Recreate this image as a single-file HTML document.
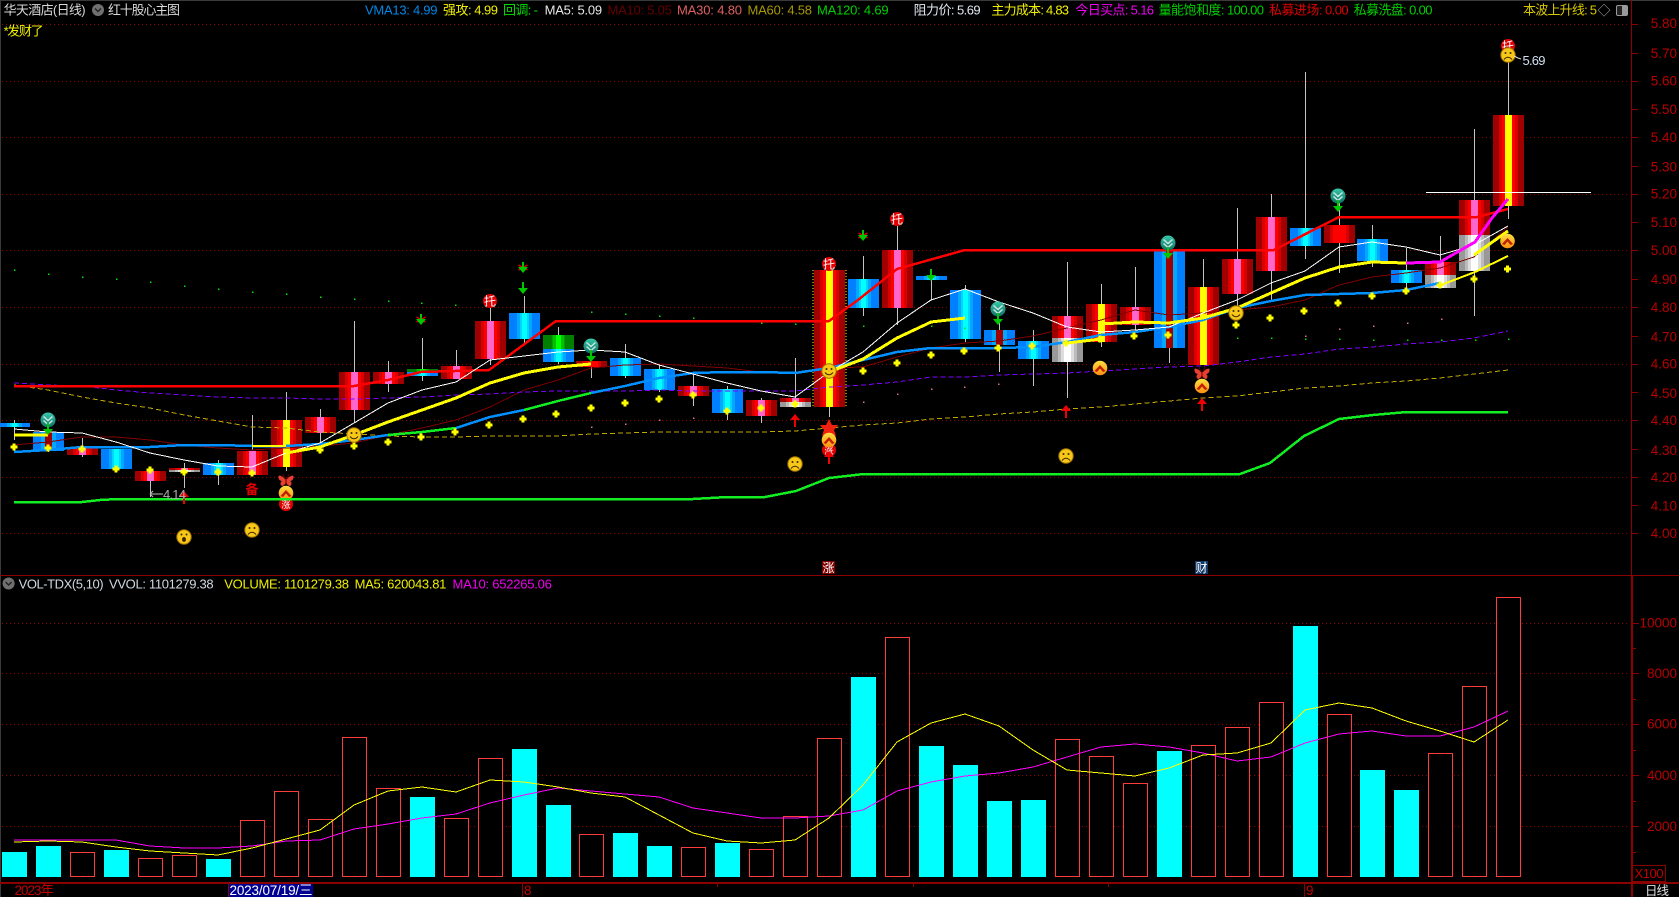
<!DOCTYPE html>
<html><head><meta charset="utf-8"><title>华天酒店</title>
<style>
html,body{margin:0;padding:0;background:#000;width:1679px;height:897px;overflow:hidden}
svg{display:block;font-family:"Liberation Sans","Noto Sans CJK SC",sans-serif}
.h{font-size:13px}
.a{font-size:13.5px;fill:#b80000;text-anchor:end}
.r{fill:#000;stroke:#ff3c3c;stroke-width:1}
.c{fill:#0ff}
</style></head><body>
<svg width="1679" height="897" viewBox="0 0 1679 897" xmlns="http://www.w3.org/2000/svg">
<defs>
<linearGradient id="p"><stop offset="0" stop-color="#a00000"/><stop offset=".19" stop-color="#a00000"/><stop offset=".19" stop-color="#d80000"/><stop offset=".29" stop-color="#d80000"/><stop offset=".29" stop-color="#f00"/><stop offset=".39" stop-color="#f00"/><stop offset=".39" stop-color="#ff66cc"/><stop offset=".61" stop-color="#ff66cc"/><stop offset=".61" stop-color="#f00"/><stop offset=".71" stop-color="#f00"/><stop offset=".71" stop-color="#d80000"/><stop offset=".81" stop-color="#d80000"/><stop offset=".81" stop-color="#a00000"/><stop offset="1" stop-color="#a00000"/></linearGradient>
<linearGradient id="y"><stop offset="0" stop-color="#a00000"/><stop offset=".19" stop-color="#a00000"/><stop offset=".19" stop-color="#d80000"/><stop offset=".29" stop-color="#d80000"/><stop offset=".29" stop-color="#f00"/><stop offset=".39" stop-color="#f00"/><stop offset=".39" stop-color="#ff0"/><stop offset=".61" stop-color="#ff0"/><stop offset=".61" stop-color="#f00"/><stop offset=".71" stop-color="#f00"/><stop offset=".71" stop-color="#d80000"/><stop offset=".81" stop-color="#d80000"/><stop offset=".81" stop-color="#a00000"/><stop offset="1" stop-color="#a00000"/></linearGradient>
<linearGradient id="d"><stop offset="0" stop-color="#a00000"/><stop offset=".19" stop-color="#a00000"/><stop offset=".19" stop-color="#d80000"/><stop offset=".29" stop-color="#d80000"/><stop offset=".29" stop-color="#f00"/><stop offset=".71" stop-color="#f00"/><stop offset=".71" stop-color="#d80000"/><stop offset=".81" stop-color="#d80000"/><stop offset=".81" stop-color="#a00000"/><stop offset="1" stop-color="#a00000"/></linearGradient>
<linearGradient id="b"><stop offset="0" stop-color="#007fff"/><stop offset=".26" stop-color="#007fff"/><stop offset=".26" stop-color="#00a8ff"/><stop offset=".35" stop-color="#00a8ff"/><stop offset=".35" stop-color="#00d4ff"/><stop offset=".42" stop-color="#00d4ff"/><stop offset=".42" stop-color="#0ff"/><stop offset=".58" stop-color="#0ff"/><stop offset=".58" stop-color="#00d4ff"/><stop offset=".65" stop-color="#00d4ff"/><stop offset=".65" stop-color="#00a8ff"/><stop offset=".74" stop-color="#00a8ff"/><stop offset=".74" stop-color="#007fff"/><stop offset="1" stop-color="#007fff"/></linearGradient>
<linearGradient id="m"><stop offset="0" stop-color="#007fff"/><stop offset=".26" stop-color="#007fff"/><stop offset=".26" stop-color="#00a8ff"/><stop offset=".39" stop-color="#00a8ff"/><stop offset=".39" stop-color="#a00000"/><stop offset=".61" stop-color="#a00000"/><stop offset=".61" stop-color="#00a8ff"/><stop offset=".74" stop-color="#00a8ff"/><stop offset=".74" stop-color="#007fff"/><stop offset="1" stop-color="#007fff"/></linearGradient>
<linearGradient id="w"><stop offset="0" stop-color="#999"/><stop offset=".19" stop-color="#999"/><stop offset=".19" stop-color="#bbb"/><stop offset=".29" stop-color="#bbb"/><stop offset=".29" stop-color="#ddd"/><stop offset=".39" stop-color="#ddd"/><stop offset=".39" stop-color="#fff"/><stop offset=".61" stop-color="#fff"/><stop offset=".61" stop-color="#ddd"/><stop offset=".71" stop-color="#ddd"/><stop offset=".71" stop-color="#bbb"/><stop offset=".81" stop-color="#bbb"/><stop offset=".81" stop-color="#999"/><stop offset="1" stop-color="#999"/></linearGradient>
<linearGradient id="g"><stop offset="0" stop-color="#008000"/><stop offset=".3" stop-color="#008000"/><stop offset=".3" stop-color="#00c000"/><stop offset=".42" stop-color="#00c000"/><stop offset=".42" stop-color="#0f0"/><stop offset=".58" stop-color="#0f0"/><stop offset=".58" stop-color="#00c000"/><stop offset=".7" stop-color="#00c000"/><stop offset=".7" stop-color="#008000"/><stop offset="1" stop-color="#008000"/></linearGradient>
<linearGradient id="tl" x1="0" y1="0" x2="0" y2="1"><stop offset="0" stop-color="#38c8a8"/><stop offset="1" stop-color="#0f6f68"/></linearGradient>
<linearGradient id="or" x1="0" y1="0" x2="0" y2="1"><stop offset="0" stop-color="#ffe040"/><stop offset="1" stop-color="#ff9010"/></linearGradient>
<g id="teal"><circle r="7.500" fill="url(#tl)"/><path d="M-4.500-3.500L0 .5L4.500-3.500M-4.500 .5L0 4.500L4.500 .5" fill="none" stroke="#c8e8e0" stroke-width="1.500"/></g>
<g id="ga"><path d="M-1-8h2v6h4l-5 6l-5-6h4z" fill="#00c800"/></g>
<g id="gs"><path d="M-4.500-3l9 5M4.500-3l-9 5" stroke="#e00000" stroke-width="1.500"/><path d="M-1-6h2v5h4l-5 6l-5-6h4z" fill="#00c800"/></g>
<g id="ra"><path d="M-1 7h2v-7h4l-5-6l-5 6h4z" fill="#f00000"/></g>
<g id="smile"><circle r="7.200" fill="#f8c818" stroke="#a07400" stroke-width="1"/><circle cx="-2.500" cy="-2" r="1" fill="#402800"/><circle cx="2.500" cy="-2" r="1" fill="#402800"/><path d="M-4 1.500Q0 6 4 1.500" fill="none" stroke="#402800" stroke-width="1"/></g>
<g id="sad"><circle r="7.200" fill="#f8c818" stroke="#a07400" stroke-width="1"/><circle cx="-2.500" cy="-2" r="1" fill="#402800"/><circle cx="2.500" cy="-2" r="1" fill="#402800"/><path d="M-4 4.500Q0 0 4 4.500" fill="none" stroke="#402800" stroke-width="1"/></g>
<g id="wow"><circle r="7.200" fill="#f8c818" stroke="#a07400" stroke-width="1"/><circle cx="-2.500" cy="-2.500" r="1" fill="#402800"/><circle cx="2.500" cy="-2.500" r="1" fill="#402800"/><ellipse cy="2.500" rx="2" ry="2.500" fill="#402800"/></g>
<g id="up"><circle r="7.300" fill="url(#or)"/><path d="M-5.500 3L0-3L5.500 3L3 4L0 .5L-3 4z" fill="#c02000"/></g>
<g id="bf"><path d="M0 0C-3-4-7-5-7.500-4C-8-1-6 1-4 1C-6 2-6 5-4 6C-2 6 0 3 0 1C0 3 2 6 4 6C6 5 6 2 4 1C6 1 8-1 7.500-4C7-5 3-4 0 0z" fill="#e84030"/><path d="M0-1V5M-1-1L-3-6M1-1L3-6" stroke="#600" stroke-width="1" fill="none"/></g>
<g id="dm"><path d="M-1.500-3.500h3v2h2v3h-2v2h-3v-2h-2v-3h2z" fill="#ff0" shape-rendering="crispEdges"/></g>
</defs>

<rect width="1679" height="897" fill="#000"/>
<rect width="1679" height="1" fill="#3a3a3a"/><rect width="1" height="897" fill="#3a3a3a"/>

<!-- grids -->
<g stroke="#900000" stroke-width="1" stroke-dasharray="1 3" shape-rendering="crispEdges">
<path d="M2 24.500H1628M2 81.500H1628M2 137.500H1628M2 194.500H1628M2 250.500H1628M2 307.500H1628M2 364.500H1628M2 420.500H1628M2 477.500H1628M2 533.500H1628"/>
<path d="M2 623.500H1628M2 673.500H1628M2 724.500H1628M2 775.500H1628M2 826.500H1628"/>
</g>

<!-- frame -->
<g fill="#8b0000" shape-rendering="crispEdges">
<rect x="0" y="575" width="1679" height="1"/>
<rect x="0" y="882" width="1679" height="2"/>
<rect x="1631" y="0" width="1" height="575"/>
<rect x="1631" y="575" width="2" height="322"/>
<path d="M1632 24h6v1h-6zM1632 53h6v1h-6zM1632 81h6v1h-6zM1632 109h6v1h-6zM1632 137h6v1h-6zM1632 166h6v1h-6zM1632 194h6v1h-6zM1632 222h6v1h-6zM1632 250h6v1h-6zM1632 279h6v1h-6zM1632 307h6v1h-6zM1632 336h6v1h-6zM1632 364h6v1h-6zM1632 392h6v1h-6zM1632 420h6v1h-6zM1632 449h6v1h-6zM1632 477h6v1h-6zM1632 505h6v1h-6zM1632 533h6v1h-6z"/>
<path d="M1633 623h6v1h-6zM1633 648h3v1h-3zM1633 673h6v1h-6zM1633 699h3v1h-3zM1633 724h6v1h-6zM1633 750h3v1h-3zM1633 775h6v1h-6zM1633 801h3v1h-3zM1633 826h6v1h-6zM1633 852h3v1h-3z"/>
<rect x="228" y="884" width="1" height="13"/><rect x="522" y="884" width="1" height="13"/><rect x="1304" y="884" width="1" height="13"/>
<path d="M717 884h1v3h-1zM913 884h1v3h-1zM1108 884h1v3h-1z"/>
</g>

<!-- header -->
<g class="h">
<text x="3.600" y="14.500" textLength="82" fill="#d8d8d8">华天酒店(日线)</text>
<text x="108" y="14.500" textLength="72" fill="#d8d8d8">红十股心主图</text>
<text x="365" y="14.500" textLength="72.500" fill="#0088e8">VMA13: 4.99</text>
<text x="443" y="14.500" textLength="55" fill="#f0f000">强攻: 4.99</text>
<text x="503" y="14.500" textLength="35" fill="#00e000">回调: -</text>
<text x="544.600" y="14.500" textLength="57.500" fill="#e8e8e8">MA5: 5.09</text>
<text x="607.500" y="14.500" textLength="64.300" fill="#640000">MA10: 5.05</text>
<text x="677" y="14.500" textLength="65" fill="#e06060">MA30: 4.80</text>
<text x="747.500" y="14.500" textLength="64.500" fill="#a89800">MA60: 4.58</text>
<text x="817" y="14.500" textLength="71.600" fill="#00d000">MA120: 4.69</text>
<text x="913.600" y="14.500" textLength="67" fill="#e0e8f0">阻力价: 5.69</text>
<text x="991.400" y="14.500" textLength="77.600" fill="#f0f000">主力成本: 4.83</text>
<text x="1075.400" y="14.500" textLength="78.600" fill="#f000f0">今日买点: 5.16</text>
<text x="1158.600" y="14.500" textLength="105.400" fill="#00d000">量能饱和度: 100.00</text>
<text x="1269" y="14.500" textLength="79.600" fill="#e00000">私募进场: 0.00</text>
<text x="1353.600" y="14.500" textLength="78.900" fill="#00d000">私募洗盘: 0.00</text>
<text x="1523" y="14.500" textLength="74" fill="#d8c800">本波上升线: 5</text>
<text x="3.600" y="35.500" textLength="40" fill="#f0f000">*发财了</text>
</g>
<text x="1597.500" y="15" font-size="13" fill="#aaa">◇</text>
<rect x="1616.500" y="5.500" width="11" height="10" rx="1.500" fill="#222" stroke="#999"/><rect x="1622" y="6" width="5" height="9" fill="#999"/>
<circle cx="98" cy="10" r="6" fill="#707070"/><path d="M95 8.500L98 11.500L101 8.500" fill="none" stroke="#222" stroke-width="1.400"/>

<!-- price axis -->
<g class="a">
<text x="1677" y="28">5.80</text><text x="1677" y="58">5.70</text><text x="1677" y="85.500">5.60</text><text x="1677" y="114">5.50</text><text x="1677" y="142">5.40</text><text x="1677" y="171.500">5.30</text><text x="1677" y="198.500">5.20</text><text x="1677" y="227">5.10</text><text x="1677" y="255">5.00</text><text x="1677" y="284">4.90</text><text x="1677" y="312">4.80</text><text x="1677" y="341.500">4.70</text><text x="1677" y="368.500">4.60</text><text x="1677" y="398">4.50</text><text x="1677" y="425">4.40</text><text x="1677" y="455">4.30</text><text x="1677" y="482">4.20</text><text x="1677" y="510.500">4.10</text><text x="1677" y="538">4.00</text>
<text x="1677" y="627.500">10000</text><text x="1677" y="678">8000</text><text x="1677" y="728.500">6000</text><text x="1677" y="780">4000</text><text x="1677" y="831">2000</text>
</g>
<rect x="1632.500" y="865.500" width="33" height="16" fill="none" stroke="#8b0000"/>
<text x="1634.500" y="878" font-size="13" textLength="29" fill="#c00000">X100</text>

<!-- wicks -->
<path shape-rendering="crispEdges" fill="none" stroke="#c4c4c4" stroke-width="1" d="M14.500 420V440M48.500 425V452M82.500 438V457M150.500 481V497M184.500 463V488M218.500 460V485M252.500 415V450M286.500 392V471M320.500 409V443M354.500 321V423M388.500 361V392M422.500 338V381M456.500 350V379M490.500 303V365M524.500 296V345M558.500 327V364M591.500 361V378M625.500 344V378M659.500 365V392M693.500 374V406M727.500 386V420M761.500 398V423M795.500 358V398M829.500 265V417M863.500 256V316M897.500 226V325M931.500 276V300M965.500 285V342M999.500 323V372M1033.500 330V386M1067.500 262V398M1101.500 284V347M1135.500 267V330M1169.500 250V363M1203.500 259V290M1237.500 208V316M1271.500 194V300M1305.500 72V259M1339.500 200V273M1372.500 225V267M1406.500 248V293M1440.500 236V288M1474.500 129V316M1508.500 55V219"/>

<!-- candles -->
<g shape-rendering="crispEdges">
<rect x="-1" y="423" width="31" height="4" fill="url(#b)"/>
<rect x="33" y="432" width="31" height="19" fill="url(#m)"/>
<rect x="67" y="448" width="31" height="7" fill="url(#p)"/>
<rect x="101" y="449" width="31" height="20" fill="url(#b)"/>
<rect x="135" y="471" width="31" height="10" fill="url(#p)"/>
<rect x="169" y="468" width="31" height="2" fill="url(#p)"/><rect x="169" y="470" width="31" height="2" fill="url(#w)"/>
<rect x="203" y="463" width="31" height="12" fill="url(#b)"/>
<rect x="237" y="451" width="31" height="24" fill="url(#p)"/>
<rect x="271" y="420" width="31" height="47" fill="url(#y)"/>
<rect x="305" y="417" width="31" height="16" fill="url(#p)"/>
<rect x="339" y="372" width="31" height="38" fill="url(#p)"/>
<rect x="373" y="372" width="31" height="12" fill="url(#p)"/>
<rect x="407" y="369" width="31" height="3" fill="url(#g)"/><rect x="407" y="372" width="31" height="4" fill="url(#b)"/>
<rect x="441" y="366" width="31" height="13" fill="url(#p)"/>
<rect x="475" y="321" width="31" height="38" fill="url(#p)"/>
<rect x="509" y="313" width="31" height="26" fill="url(#b)"/>
<rect x="543" y="335" width="31" height="14" fill="url(#g)"/><rect x="543" y="349" width="31" height="13" fill="url(#b)"/>
<rect x="576" y="361" width="31" height="6" fill="url(#d)"/>
<rect x="610" y="358" width="31" height="18" fill="url(#b)"/>
<rect x="644" y="369" width="31" height="21" fill="url(#b)"/>
<rect x="678" y="386" width="31" height="10" fill="url(#p)"/>
<rect x="712" y="389" width="31" height="24" fill="url(#b)"/>
<rect x="746" y="400" width="31" height="16" fill="url(#p)"/>
<rect x="780" y="398" width="31" height="4" fill="url(#p)"/><rect x="780" y="402" width="31" height="5" fill="url(#w)"/>
<rect x="814" y="270" width="31" height="137" fill="url(#y)"/>
<rect x="848" y="279" width="31" height="29" fill="url(#b)"/>
<rect x="882" y="250" width="31" height="58" fill="url(#p)"/>
<rect x="916" y="276" width="31" height="4" fill="url(#b)"/>
<rect x="950" y="290" width="31" height="49" fill="url(#b)"/>
<rect x="984" y="330" width="31" height="15" fill="url(#m)"/>
<rect x="1018" y="341" width="31" height="18" fill="url(#b)"/>
<rect x="1052" y="316" width="31" height="22" fill="url(#p)"/><rect x="1052" y="338" width="31" height="24" fill="url(#w)"/>
<rect x="1086" y="304" width="31" height="38" fill="url(#y)"/>
<rect x="1120" y="307" width="31" height="18" fill="url(#p)"/>
<rect x="1154" y="251" width="31" height="97" fill="url(#m)"/>
<rect x="1188" y="287" width="31" height="78" fill="url(#y)"/>
<rect x="1222" y="259" width="31" height="35" fill="url(#p)"/>
<rect x="1256" y="217" width="31" height="54" fill="url(#p)"/>
<rect x="1290" y="228" width="31" height="18" fill="url(#b)"/>
<rect x="1324" y="225" width="31" height="18" fill="url(#d)"/>
<rect x="1357" y="239" width="31" height="22" fill="url(#b)"/>
<rect x="1391" y="270" width="31" height="13" fill="url(#b)"/>
<rect x="1425" y="262" width="31" height="13" fill="url(#p)"/><rect x="1425" y="275" width="31" height="13" fill="url(#w)"/>
<rect x="1459" y="200" width="31" height="35" fill="url(#p)"/><rect x="1459" y="235" width="31" height="36" fill="url(#w)"/>
<rect x="1493" y="115" width="31" height="91" fill="url(#y)"/>
<path d="M813 270V407M846 270V407" stroke="#ff0" stroke-dasharray="1 2" fill="none"/>
</g>

<!-- price lines -->
<g fill="none" shape-rendering="crispEdges" stroke-linejoin="round">
<polyline stroke="#800000" stroke-width="1" points="14,445 48,442 82,437 116,437 150,440 184,445 218,448 252,450 286,448 320,446 354,443 388,435 422,428 456,420 490,407 524,390 558,380 591,368 625,365 659,364 693,366 727,368 761,372 795,373 829,368 863,367 897,357 931,348 965,343 999,341 1033,336 1067,328 1101,320 1135,310 1169,315 1203,313 1237,310 1271,307 1305,300 1339,285 1372,277 1406,273 1440,268 1474,257 1508,227"/>
<polyline stroke="#8000ff" stroke-width="1" stroke-dasharray="5 3" points="14,383 48,385 82,386 116,390 150,393 184,395 218,397 252,398 286,398 320,399 354,399 388,398 422,397 456,395 490,394 524,392 558,391 591,391 625,391 659,390 693,391 727,391 761,391 795,391 829,387 863,385 897,382 931,377 965,377 999,375 1033,374 1067,373 1101,371 1135,369 1169,367 1203,366 1237,362 1271,357 1305,354 1339,349 1372,347 1406,344 1440,342 1474,338 1508,331"/>
<polyline stroke="#c0a800" stroke-width="1" stroke-dasharray="5 3" points="14,385 48,390 82,397 116,403 150,408 184,415 218,421 252,427 286,428 320,432 354,434 388,436 422,437 456,437 490,436 524,436 558,436 591,434 625,433 659,432 693,432 727,432 761,432 795,431 829,428 863,425 897,423 931,419 965,417 999,414 1033,412 1067,409 1101,407 1135,404 1169,401 1203,398 1237,396 1271,392 1305,388 1339,386 1372,383 1406,381 1440,378 1474,374 1508,370"/>
<polyline stroke="#11ee22" stroke-width="2.500" points="14,502 82,502 100,500 118,499 693,499 728,497 765,497 796,491 829,478 864,474 1240,474 1270,463 1304,436 1339,419 1373,415 1407,412 1508,412"/>
<g stroke="#0090ff" stroke-width="2.500"><polyline points="14,452 48,450 82,447 116,447 150,447 184,445 218,445 252,446 286,446 320,444 354,440 388,435"/><polyline points="456,428 490,417 524,410"/><polyline points="591,393 625,386 659,378 693,373 727,372 761,372 795,373 829,368 863,360 897,352 931,348 965,348 999,348 1033,347 1067,342 1101,335 1135,332 1169,327 1203,320 1237,308 1271,301 1305,295 1339,294 1372,293 1406,290 1440,283"/></g>
<g stroke="#11ee22" stroke-width="2.500"><polyline points="388,435 422,432 456,428"/><polyline points="524,410 558,401 591,393"/></g>
<polyline stroke="#f00" stroke-width="2.500" points="14,386 354,386 388,380 421,372 489,370 556,321 829,321 858,300 897,269 965,250 1274,250 1339,217 1477,217 1508,209"/>
<polyline stroke="#fff" stroke-width="1" points="14,429 48,432 82,433 116,442 150,453 184,460 218,466 252,467 286,453 320,443 354,423 388,403 422,390 456,382 490,360 524,356 558,352 591,350 625,352 659,365 693,374 727,383 761,391 795,397 829,372 863,352 897,323 931,300 965,289 999,302 1033,313 1067,327 1101,332 1135,330 1169,327 1203,313 1237,300 1271,283 1305,271 1339,247 1372,242 1406,247 1440,255 1474,245 1508,226"/>
<g stroke="#ff0" stroke-width="3"><polyline points="14,435 48,435"/><polyline stroke-width="2" points="252,446 286,446"/><polyline points="286,453 320,447 354,435 388,422 422,410 456,398 490,383 524,373 558,367 591,364"/><polyline points="829,372 863,359 897,338 931,322 965,318"/><polyline points="1067,343 1101,339"/><polyline points="1101,324 1135,322 1169,323 1203,318 1237,308 1271,293 1305,278 1339,267 1372,262 1406,263"/><polyline points="1474,255 1508,231"/><polyline stroke-width="2" points="1441,285 1475,272 1508,256"/></g>
<polyline stroke="#f0f" stroke-width="3" points="1406,263 1440,262 1475,242 1492,218 1508,199"/>
<path stroke="#fff" stroke-width="1" d="M1426 192.500H1591"/>
</g>

<!-- small dots -->
<path fill="none" stroke="#00e000" stroke-width="1.500" shape-rendering="crispEdges" d="M14 270h1.500M48 274h1.500M82 277h1.500M116 279h1.500M150 282h1.500M184 286h1.500M218 289h1.500M252 292h1.500M286 294h1.500M320 297h1.500M354 299h1.500M388 301h1.500M421 303h1.500M455 305h1.500M591 312h1.500M625 314h1.500M659 316h1.500M693 318h1.500M761 323h1.500M795 324h1.500M863 326h1.500M931 326h1.500M964 328h1.500M1237 338h1.500M1271 338h1.500M1305 339h1.500M1339 339h1.500M1373 340h1.500M1407 340h1.500M1441 340h1.500M1475 340h1.500M1508 339h1.500"/>
<path fill="none" stroke="#e07080" stroke-width="1.500" shape-rendering="crispEdges" d="M1305 336h1.500M1339 329h1.500M1373 326h1.500M1407 323h1.500M1441 319h1.500M931 389h1.500M964 387h1.500M897 394h1.500M998 384h1.500M863 402h1.500M693 418h1.500M659 420h1.500M625 424h1.500M591 427h1.500"/>

<!-- diamonds -->
<g>
<use href="#dm" x="14" y="447"/><use href="#dm" x="48" y="448"/><use href="#dm" x="82" y="449"/><use href="#dm" x="116" y="469"/><use href="#dm" x="150" y="470"/><use href="#dm" x="184" y="472"/><use href="#dm" x="218" y="472"/><use href="#dm" x="252" y="473"/><use href="#dm" x="320" y="450"/><use href="#dm" x="354" y="446"/><use href="#dm" x="388" y="442"/><use href="#dm" x="421" y="437"/><use href="#dm" x="455" y="432"/><use href="#dm" x="489" y="425"/><use href="#dm" x="523" y="419"/><use href="#dm" x="556" y="414"/><use href="#dm" x="591" y="408"/><use href="#dm" x="625" y="403"/><use href="#dm" x="659" y="399"/><use href="#dm" x="693" y="395"/><use href="#dm" x="727" y="411"/><use href="#dm" x="761" y="408"/><use href="#dm" x="795" y="404"/><use href="#dm" x="863" y="371"/><use href="#dm" x="897" y="363"/><use href="#dm" x="931" y="355"/><use href="#dm" x="964" y="351"/><use href="#dm" x="998" y="348"/><use href="#dm" x="1032" y="346"/><use href="#dm" x="1066" y="343"/><use href="#dm" x="1100" y="339"/><use href="#dm" x="1134" y="336"/><use href="#dm" x="1168" y="335"/><use href="#dm" x="1236" y="325"/><use href="#dm" x="1270" y="318"/><use href="#dm" x="1304" y="311"/><use href="#dm" x="1338" y="303"/><use href="#dm" x="1372" y="296"/><use href="#dm" x="1406" y="291"/><use href="#dm" x="1440" y="285"/><use href="#dm" x="1474" y="279"/><use href="#dm" x="1507.500" y="269"/>
</g>

<!-- icons -->
<use href="#teal" x="48" y="420"/><use href="#ga" x="48" y="431"/>
<use href="#teal" x="591" y="346"/><use href="#ga" x="591" y="358"/>
<use href="#teal" x="998" y="309"/><use href="#ga" x="998" y="321"/>
<use href="#teal" x="1168" y="243"/><use href="#ga" x="1168" y="255"/>
<use href="#teal" x="1338" y="196"/><use href="#ga" x="1338" y="208"/>
<use href="#gs" x="421" y="320"/><use href="#gs" x="523" y="268"/><use href="#ga" x="523" y="290"/><use href="#gs" x="863" y="236"/><use href="#ga" x="931" y="277"/>
<use href="#smile" x="354" y="435"/><use href="#smile" x="829" y="371"/><use href="#smile" x="1236" y="313"/>
<use href="#sad" x="252" y="530"/><use href="#sad" x="795" y="464"/><use href="#sad" x="1066" y="456"/><use href="#wow" x="184" y="537"/>
<use href="#bf" x="286" y="480"/><use href="#bf" x="1202" y="373"/>
<path d="M829 419L832 425L838 425L834 430L836 436L829 433L822 436L824 430L820 425L826 425z" fill="#f02010"/>
<circle cx="286" cy="504" r="7" fill="#e00000"/><text x="281.500" y="508" font-size="9" fill="#fff">涨</text>
<circle cx="829" cy="450" r="7" fill="#e00000"/><text x="824.500" y="454" font-size="9" fill="#fff">涨</text>
<use href="#up" x="286" y="493"/><use href="#up" x="829" y="440"/><use href="#up" x="1100" y="368"/><use href="#up" x="1202" y="386"/><use href="#up" x="1507.500" y="241"/>
<path d="M270 499H303" stroke="#11ee22" stroke-width="2.500" shape-rendering="crispEdges"/>
<use href="#ra" x="795" y="420"/><use href="#ra" x="829" y="457"/><use href="#ra" x="1066" y="411"/><use href="#ra" x="1202" y="404"/><use href="#ra" x="184" y="497"/>
<text x="245.500" y="494" font-size="13" font-weight="bold" fill="#e00000">备</text>

<circle cx="490" cy="301" r="7" fill="#e00000"/><text x="484" y="305.500" font-size="12" fill="#fff">托</text>
<circle cx="829" cy="264" r="7" fill="#e00000"/><text x="823" y="268.500" font-size="12" fill="#fff">托</text>
<circle cx="897" cy="219" r="7" fill="#e00000"/><text x="891" y="223.500" font-size="12" fill="#fff">托</text>
<circle cx="1508" cy="46" r="7" fill="#e00000"/><text x="1502" y="50.500" font-size="12" fill="#fff">托</text>
<use href="#sad" x="1508" y="55"/>
<path d="M1514 56L1518 58L1521 59" fill="none" stroke="#ddd"/>
<text x="1522.500" y="65" font-size="13" textLength="23" fill="#d0e0f0">5.69</text>
<path d="M150 494H163M150 494L153 491M150 494L153 497" fill="none" stroke="#bbb"/>
<text x="163" y="499" font-size="13" textLength="23" fill="#aaa">4.14</text>

<rect x="822" y="561" width="13" height="13" fill="#800000"/><text x="822.500" y="572" font-size="12" fill="#fff">涨</text>
<rect x="1195" y="561" width="13" height="13" fill="#103868"/><text x="1195.500" y="572" font-size="12" fill="#fff">财</text>

<!-- volume header -->
<circle cx="8.600" cy="583.500" r="6" fill="#707070"/><path d="M5.600 582L8.600 585L11.600 582" fill="none" stroke="#222" stroke-width="1.400"/>
<g class="h">
<text x="18.600" y="588.500" textLength="85" fill="#d0d8e0">VOL-TDX(5,10)</text>
<text x="109" y="588.500" textLength="104.600" fill="#d0d8e0">VVOL: 1101279.38</text>
<text x="224.300" y="588.500" textLength="124.700" fill="#f0f000">VOLUME: 1101279.38</text>
<text x="354.600" y="588.500" textLength="91.800" fill="#f0f000">MA5: 620043.81</text>
<text x="452.500" y="588.500" textLength="99.300" fill="#f000f0">MA10: 652265.06</text>
</g>

<!-- volume bars -->
<g shape-rendering="crispEdges">
<rect class="c" x="2" y="852" width="25" height="25"/><rect class="c" x="36" y="846" width="25" height="31"/><rect class="r" x="70.500" y="852.500" width="24" height="24"/><rect class="c" x="104" y="850" width="25" height="27"/><rect class="r" x="138.500" y="858.500" width="24" height="18"/><rect class="r" x="172.500" y="855.500" width="24" height="21"/><rect class="c" x="206" y="859" width="25" height="18"/><rect class="r" x="240.500" y="820.500" width="24" height="56"/><rect class="r" x="274.500" y="791.500" width="24" height="85"/><rect class="r" x="308.500" y="819.500" width="24" height="57"/><rect class="r" x="342.500" y="737.500" width="24" height="139"/><rect class="r" x="376.500" y="788.500" width="24" height="88"/><rect class="c" x="410" y="797" width="25" height="80"/><rect class="r" x="444.500" y="818.500" width="24" height="58"/><rect class="r" x="478.500" y="758.500" width="24" height="118"/><rect class="c" x="512" y="749" width="25" height="128"/><rect class="c" x="546" y="805" width="25" height="72"/><rect class="r" x="579.500" y="834.500" width="24" height="42"/><rect class="c" x="613" y="833" width="25" height="44"/><rect class="c" x="647" y="846" width="25" height="31"/><rect class="r" x="681.500" y="847.500" width="24" height="29"/><rect class="c" x="715" y="843" width="25" height="34"/><rect class="r" x="749.500" y="849.500" width="24" height="27"/><rect class="r" x="783.500" y="816.500" width="24" height="60"/><rect class="r" x="817.500" y="738.500" width="24" height="138"/><rect class="c" x="851" y="677" width="25" height="200"/><rect class="r" x="885.500" y="637.500" width="24" height="239"/><rect class="c" x="919" y="746" width="25" height="131"/><rect class="c" x="953" y="765" width="25" height="112"/><rect class="c" x="987" y="801" width="25" height="76"/><rect class="c" x="1021" y="800" width="25" height="77"/><rect class="r" x="1055.500" y="739.500" width="24" height="137"/><rect class="r" x="1089.500" y="756.500" width="24" height="120"/><rect class="r" x="1123.500" y="783.500" width="24" height="93"/><rect class="c" x="1157" y="751" width="25" height="126"/><rect class="r" x="1191.500" y="745.500" width="24" height="131"/><rect class="r" x="1225.500" y="727.500" width="24" height="149"/><rect class="r" x="1259.500" y="702.500" width="24" height="174"/><rect class="c" x="1293" y="626" width="25" height="251"/><rect class="r" x="1327.500" y="714.500" width="24" height="162"/><rect class="c" x="1360" y="770" width="25" height="107"/><rect class="c" x="1394" y="790" width="25" height="87"/><rect class="r" x="1428.500" y="753.500" width="24" height="123"/><rect class="r" x="1462.500" y="686.500" width="24" height="190"/><rect class="r" x="1496.500" y="597.500" width="24" height="279"/>
</g>
<g fill="none" shape-rendering="crispEdges">
<polyline stroke="#f0f" stroke-width="1" points="14,840 48,840 82,840 116,840 150,846 184,848 218,848 252,846 286,841 320,840 354,829 388,824 422,818 456,814 490,803 524,795 558,788 591,791 625,794 659,797 693,808 727,813 761,818 795,818 829,816 863,810 897,791 931,782 965,776 999,773 1033,767 1067,757 1101,747 1135,744 1169,747 1203,753 1237,761 1271,757 1305,743 1339,734 1372,731 1406,736 1440,736 1474,727 1508,711"/>
<polyline stroke="#ff0" stroke-width="1" points="14,842 48,841 82,842 116,847 150,851 184,853 218,855 252,848 286,839 320,830 354,805 388,791 422,787 456,792 490,780 524,782 558,787 591,793 625,797 659,815 693,833 727,841 761,843 795,840 829,818 863,785 897,742 931,723 965,714 999,726 1033,750 1067,770 1101,773 1135,776 1169,768 1203,755 1237,753 1271,743 1305,710 1339,703 1372,708 1406,721 1440,731 1474,742 1508,720"/>
</g>

<!-- date bar -->
<text x="14.500" y="895" font-size="13.500" textLength="39.500" fill="#c00000">2023年</text>
<rect x="229" y="884" width="84" height="13" fill="#000090"/>
<text x="229.500" y="895" font-size="13.500" textLength="83" fill="#fff">2023/07/19/三</text>
<text x="524" y="895" font-size="13.500" fill="#c00000">8</text>
<text x="1306" y="895" font-size="13.500" fill="#c00000">9</text>
<text x="1645" y="895" font-size="12.500" textLength="24" fill="#e0e0e0">日线</text>
</svg>
</body></html>
